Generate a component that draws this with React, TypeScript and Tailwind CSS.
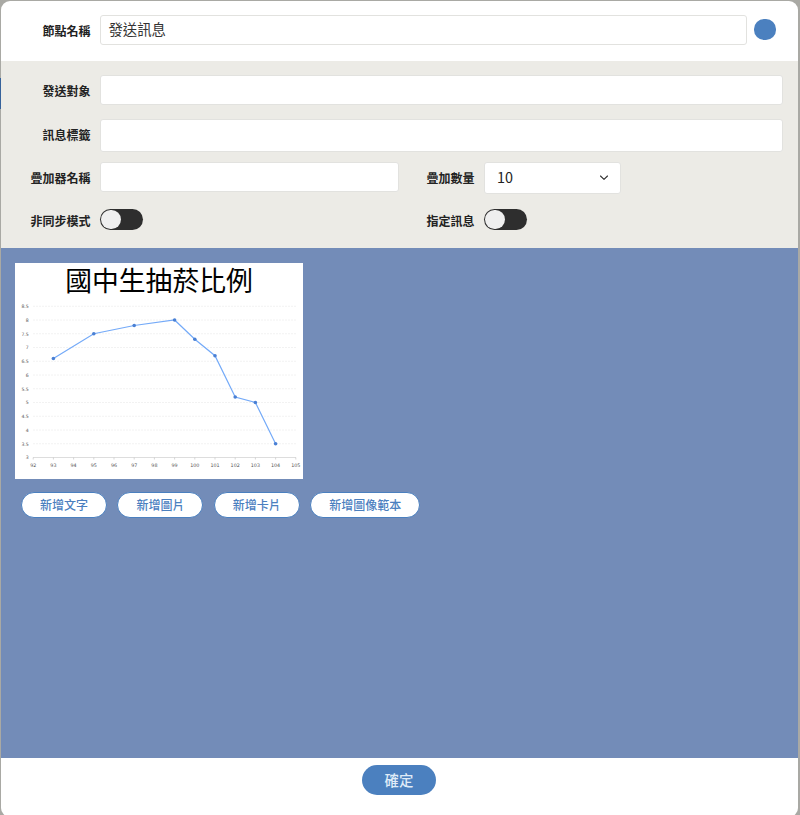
import React from "react";

const points: [number, number][] = [
  [93, 6.6], [95, 7.5], [97, 7.8], [99, 8], [100, 7.3], [101, 6.7], [102, 5.2], [103, 5], [104, 3.5],
];
const px = (v: number) => 18.2 + (v - 92) * 20.2;
const py = (v: number) => 194.5 - (v - 3) * 27.5;
const yTicks = [3, 3.5, 4, 4.5, 5, 5.5, 6, 6.5, 7, 7.5, 8, 8.5];
const xTicks = Array.from({ length: 14 }, (_, i) => 92 + i);

function Chart() {
  return (
    <div className="h-[216px] w-[288px] bg-white">
      <h2 className="h-[36px] text-center text-[26.8px] leading-[34px] font-normal text-black">國中生抽菸比例</h2>
      <svg width="288" height="180" viewBox="0 36 288 180" className="block">
        {yTicks.map((t) => (
          <g key={t}>
            {t !== 3 && (
              <line x1="18" x2="281" y1={py(t)} y2={py(t)} stroke="#efefef" strokeWidth="0.8" strokeDasharray="2 1" />
            )}
            <text x="13.7" y={py(t) + 1.8} textAnchor="end" className="fill-[#555] font-['DejaVu_Sans'] text-[4.6px]">{t}</text>
          </g>
        ))}
        <line x1="18" x2="281" y1="194.5" y2="194.5" stroke="#d4d4d4" strokeWidth="0.8" />
        {xTicks.map((t) => (
          <g key={t}>
            <line x1={px(t)} x2={px(t)} y1="194.5" y2="196.5" stroke="#c4c4c4" strokeWidth="0.7" />
            <text x={px(t)} y="204.2" textAnchor="middle" className="fill-[#555] font-['DejaVu_Sans'] text-[4.8px]">{t}</text>
          </g>
        ))}
        <polyline points={points.map(([a, b]) => `${px(a)},${py(b)}`).join(" ")} fill="none" stroke="#74aaf8" strokeWidth="1.2" />
        {points.map(([a, b]) => (
          <circle key={a} cx={px(a)} cy={py(b)} r="1.8" fill="#4a80d4" />
        ))}
      </svg>
    </div>
  );
}

function Label({ children, className = "" }: { children: React.ReactNode; className?: string }) {
  return (
    <span className={`shrink-0 pr-[9.5px] text-right text-[12px] leading-[18px] font-bold text-[#222] ${className}`}>
      {children}
    </span>
  );
}

function Toggle() {
  return (
    <button className="flex h-[21px] w-[43px] shrink-0 items-center rounded-full bg-[#2e2e2e] px-px">
      <span className="h-[19px] w-5 rounded-full bg-[#efefef]" />
    </button>
  );
}

const field = "rounded-[3px] border border-[#e2e2df] bg-white";

export default function App() {
  return (
    <div className="relative h-[815px] w-[800px] overflow-hidden bg-[#a9a9a4] pl-px pt-px font-['Noto_Sans_CJK_TC','Noto_Sans',sans-serif]">
      <div className="absolute left-0 top-[78px] h-[31px] w-px bg-[#36629b]" />
      <div className="flex h-[816px] w-[797px] flex-col overflow-hidden rounded-[9px] bg-white">
        <header className="flex h-[60px] shrink-0 items-start pt-[14px]">
          <Label className="mt-[7px] w-[99px]">節點名稱</Label>
          <div className={`flex h-[30px] w-[647px] items-center pb-[2px] pl-[7.4px] text-[14.4px] leading-5 text-[#333] ${field}`}>發送訊息</div>
          <button className="ml-[7px] mt-1 h-[21px] w-[22px] rounded-[10px] bg-[#4b80bf]" />
        </header>

        <section className="h-[187px] shrink-0 bg-[#ecebe6] pt-[14px]">
          <div className="flex">
            <Label className="mt-[7px] w-[99px]">發送對象</Label>
            <div className={`h-[30px] w-[683px] ${field}`} />
          </div>
          <div className="mt-[14px] flex">
            <Label className="mt-[7px] w-[99px]">訊息標籤</Label>
            <div className={`h-[33px] w-[683px] ${field}`} />
          </div>
          <div className="mt-[10px] flex">
            <Label className="mt-[7px] w-[99px]">疊加器名稱</Label>
            <div className={`h-[30px] w-[299px] ${field}`} />
            <Label className="mt-[7px] w-[85px]">疊加數量</Label>
            <div className={`flex h-[32px] w-[137px] items-center justify-between pb-[2px] pl-3 pr-[11px] text-[14.4px] text-[#222] ${field}`}>
              <span>10</span>
              <svg width="10" height="10" viewBox="0 0 10 10" fill="none" stroke="#333" strokeWidth="1.1" strokeLinecap="round" strokeLinejoin="round">
                <path d="M1.5 4 L5 7.4 L8.5 4" />
              </svg>
            </div>
          </div>
          <div className="mt-[15px] flex">
            <Label className="mt-[3px] w-[99px]">非同步模式</Label>
            <Toggle />
            <Label className="mt-[3px] w-[341px]">指定訊息</Label>
            <Toggle />
          </div>
        </section>

        <main className="h-[510px] shrink-0 bg-[#738cb8] pl-[14px] pt-[15px]">
          <Chart />
          <div className="mt-[13px] flex gap-[10.4px] pl-[6px]">
            {["新增文字", "新增圖片", "新增卡片", "新增圖像範本"].map((t) => (
              <button key={t} className="flex h-[26px] items-center rounded-full border border-[#4b80bf] bg-white px-[18px] text-[12px] leading-[18px] font-medium text-[#4b80bf]">
                {t}
              </button>
            ))}
          </div>
        </main>

        <footer className="flex justify-center pr-px pt-[7px]">
          <button className="h-[30px] w-[74px] rounded-full bg-[#4b80bf] text-[14.4px] leading-[30px] font-medium text-[#dfebf7]">確定</button>
        </footer>
      </div>
    </div>
  );
}
